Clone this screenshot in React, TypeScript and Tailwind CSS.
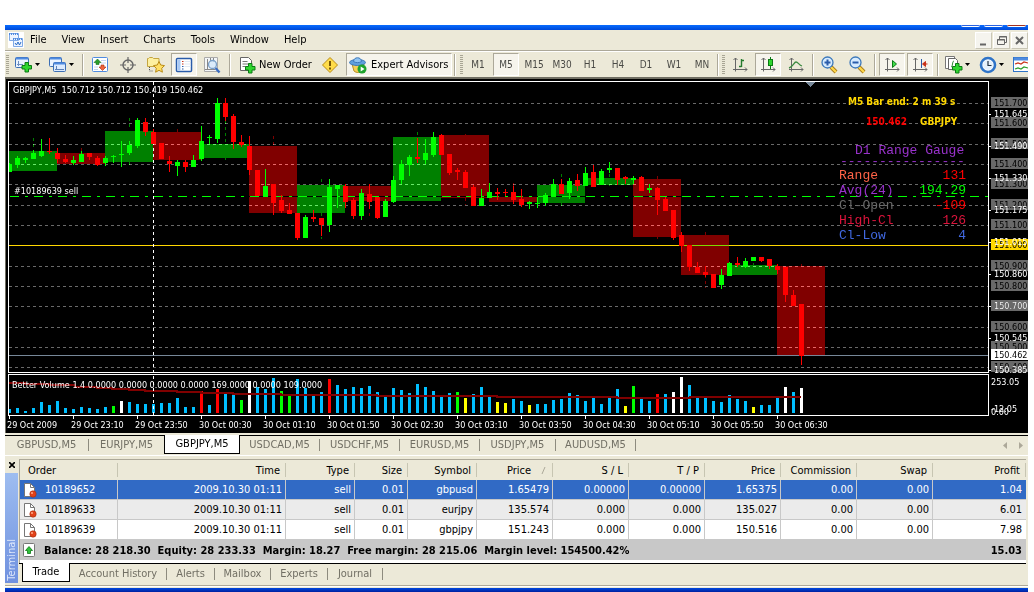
import React from "react";

type Candle = [hi: number, lo: number, top: number, bottom: number, up: 0 | 1];
type Kind = "b" | "g" | "w" | "r" | "y";

const UI = "font-['DejaVu_Sans_Condensed','Liberation_Sans',sans-serif]";

const candles: Candle[] = [
  [163, 172, 164, 172, 1], [156, 168, 158, 165, 1], [157, 163, 158, 160, 1], [150, 159, 153, 159, 1],
  [139, 157, 151, 156, 1], [138, 154, 151, 152, 0], [148, 163, 153, 159, 0], [155, 163, 159, 162, 0],
  [156, 165, 160, 163, 1], [151, 162, 154, 162, 1], [153, 160, 153, 157, 0], [156, 166, 158, 165, 0],
  [156, 166, 158, 163, 1], [155, 163, 156, 157, 1], [141, 167, 154, 155, 1], [141, 155, 145, 153, 1],
  [118, 148, 120, 146, 1], [118, 136, 122, 132, 0], [129, 144, 132, 144, 0], [143, 159, 143, 159, 0],
  [156, 172, 161, 164, 0], [160, 176, 162, 166, 1], [160, 172, 162, 167, 0], [155, 167, 160, 167, 1],
  [126, 161, 141, 159, 1], [135, 144, 137, 138, 1], [98, 143, 103, 139, 1], [98, 121, 103, 117, 0],
  [114, 149, 116, 142, 0], [135, 147, 142, 145, 0], [136, 175, 146, 170, 0], [170, 196, 170, 196, 0],
  [169, 197, 186, 197, 1], [184, 215, 184, 203, 0], [195, 213, 200, 211, 0], [203, 214, 210, 214, 0],
  [213, 240, 213, 238, 0], [215, 238, 217, 238, 1], [210, 222, 217, 219, 0], [218, 236, 218, 225, 0],
  [179, 232, 187, 225, 1], [185, 208, 185, 189, 1], [184, 208, 186, 202, 0], [198, 219, 200, 216, 0],
  [189, 220, 193, 216, 1], [184, 209, 194, 202, 0], [197, 219, 197, 218, 0], [199, 217, 201, 217, 1],
  [176, 203, 180, 202, 1], [160, 184, 164, 180, 1], [155, 176, 157, 165, 1], [138, 163, 157, 159, 0],
  [139, 164, 153, 160, 1], [132, 157, 137, 155, 1], [134, 155, 135, 155, 0], [154, 175, 154, 173, 0],
  [168, 180, 170, 172, 0], [170, 188, 172, 188, 0], [185, 206, 187, 206, 0], [189, 206, 198, 206, 1],
  [183, 198, 192, 198, 1], [188, 200, 192, 194, 0], [189, 196, 192, 193, 0], [186, 204, 192, 200, 0],
  [189, 207, 199, 205, 0], [201, 209, 202, 204, 1], [197, 208, 203, 204, 1], [193, 206, 195, 203, 1],
  [179, 197, 184, 197, 1], [179, 194, 184, 194, 0], [178, 199, 181, 193, 1], [174, 191, 180, 186, 0],
  [167, 186, 173, 186, 1], [165, 187, 172, 187, 0], [169, 185, 171, 185, 1], [162, 173, 168, 170, 1],
  [168, 185, 168, 180, 0], [176, 184, 177, 179, 0], [176, 184, 178, 180, 1], [176, 191, 177, 191, 0],
  [184, 193, 188, 190, 1], [187, 215, 188, 200, 0], [197, 211, 199, 211, 0], [210, 240, 210, 238, 0],
  [232, 252, 235, 246, 0], [245, 271, 245, 267, 0], [262, 273, 267, 273, 0], [266, 277, 272, 275, 0],
  [274, 288, 274, 288, 0], [269, 289, 275, 285, 1], [262, 276, 263, 276, 1], [257, 267, 263, 265, 0],
  [258, 268, 261, 267, 1], [257, 261, 257, 261, 1], [257, 262, 257, 261, 0], [259, 269, 259, 266, 0],
  [264, 274, 266, 270, 0], [267, 302, 267, 295, 0], [290, 306, 295, 306, 0], [304, 365, 304, 356, 0],
];

const blocks: [top: number, bottom: number, up: 0 | 1][] = [
  [151, 171, 1], [153, 164, 0], [131, 162, 1], [132, 160, 0], [144, 158, 1], [146, 213, 0],
  [185, 213, 1], [186, 201, 0], [137, 201, 1], [135, 198, 0], [197, 202, 0], [185, 203, 1],
  [178, 185, 1], [179, 237, 0], [235, 275, 0], [265, 275, 1], [266, 355, 0],
];

const blockWicks: [x: number, top: number, bottom: number, up: 0 | 1][] = [
  [33, 138, 141, 1], [33, 144, 147, 1], [81, 148, 151, 0], [129, 118, 121, 1], [129, 124, 127, 1],
  [129, 162, 165, 1], [177, 129, 132, 0], [225, 121, 124, 1], [225, 127, 130, 1], [225, 133, 136, 1],
  [225, 139, 142, 1], [225, 158, 160, 1], [273, 136, 139, 0], [273, 142, 145, 0], [321, 179, 182, 1],
  [321, 213, 216, 1], [321, 237, 239, 1], [369, 213, 216, 0], [417, 132, 135, 1], [465, 134, 135, 0],
  [465, 198, 201, 0], [465, 204, 205, 0], [513, 183, 186, 0], [561, 174, 177, 1], [561, 203, 206, 1],
  [609, 174, 177, 1], [609, 185, 186, 1], [657, 176, 179, 0], [657, 237, 239, 0], [705, 232, 235, 0],
  [705, 277, 278, 0], [705, 281, 284, 0], [705, 287, 288, 0], [753, 263, 265, 1], [801, 264, 266, 0],
];

const volumes =
  "4 5 2 5 11 8 12 5 4 6 5 4 6 7g 12w 11 9 9 9 10 10 15 6 6 22r 8 24r 19 19 13g 32w 26 24 35 22g 17g 34 25 18 21 34r 28 24 26 25 27 21 18 25 23 20 29 26 22 17 20 21g 15y 19 26 17 11y 10y 14 12 8y 9 9 13 14 20 18 12 15 9 15 24 7y 27g 14 12 19r 19 21w 36w 28 16 15 12 11 18 14 12 6y 8 8 16 26w 21 25w".split(" ");
const volumeColor: Record<Kind, string> = { b: "#00bfff", g: "#00ff00", w: "#ffffff", r: "#ff0000", y: "#ffff00" };

const grid: [y: number, label: string][] = [
  [103, "151.700"], [123, "151.600"], [144, "151.500"], [164, "151.400"], [184, "151.300"], [205, "151.200"],
  [225, "151.100"], [266, "150.900"], [286, "150.800"], [306, "150.700"], [327, "150.600"], [347, "150.500"],
  [367, "150.400"],
];
const scale: [y: number, label: string][] = [
  [114, "151.645"], [146, "151.490"], [178, "151.330"], [210, "151.175"], [242, "151.015"], [274, "150.860"],
  [306, "150.700"], [338, "150.545"], [370, "150.385"],
];
const times = [
  "29 Oct 2009", "29 Oct 23:10", "29 Oct 23:50", "30 Oct 00:30", "30 Oct 01:10", "30 Oct 01:50", "30 Oct 02:30",
  "30 Oct 03:10", "30 Oct 03:50", "30 Oct 04:30", "30 Oct 05:10", "30 Oct 05:50", "30 Oct 06:30",
];
const gauge: [y: number, label: string, value: string, c1: string, c2: string][] = [
  [179, "Range", "131", "#ff6347", "#ff0000"],
  [194, "Avg(24)", "194.29", "#9932cc", "#00ff00"],
  [209, "Cl-Open", "-109", "#696969", "#ff0000"],
  [224, "High-Cl", "126", "#dc143c", "#dc143c"],
  [239, "Cl-Low", "4", "#4169e1", "#4169e1"],
];

const upColor = (up: number) => (up ? "#00ff00" : "#ff0000");
const blockColor = (up: number) => (up ? "#008000" : "#800000");

function Chart() {
  return (
    <svg
      viewBox="5 79 1023 354"
      className={`block w-full bg-black text-[9px] ${UI}`}
      shapeRendering="crispEdges"
      role="img"
      aria-label="GBPJPY,M5"
    >
      {blocks.map(([t, b, up], i) => (
        <rect key={i} x={9 + i * 48} y={t} width={48} height={b - t} fill={blockColor(up)} />
      ))}
      {blockWicks.map(([x, t, b, up], i) => (
        <rect key={i} x={x} y={t} width={1} height={b - t} fill={blockColor(up)} />
      ))}
      {grid.map(([y]) => (
        <line key={y} x1={9} x2={988} y1={y + 0.5} y2={y + 0.5} stroke="#696969" strokeDasharray="3 3" className="mix-blend-plus-lighter" />
      ))}
      <rect x={9} y={196} width={979} height={1} fill="#000" />
      <line x1={10} x2={988} y1={196.5} y2={196.5} stroke="#00ff00" strokeDasharray="9 6 3 6" />
      <rect x={9} y={245} width={979} height={1} fill="#ffd700" />
      <rect x={681} y={245} width={48} height={1} fill="#7fd700" />
      <rect x={9} y={355} width={979} height={1} fill="#778899" />
      <line x1={153.5} x2={153.5} y1={82} y2={372} stroke="#fff" strokeDasharray="3 3" />
      {candles.map(([hi, lo, t, b, up], i) => {
        const x = 9 + i * 8;
        return (
          <g key={i} fill={upColor(up)}>
            <rect x={x} y={hi} width={1} height={lo - hi} />
            <rect x={i ? x - 2 : x} y={t} width={i ? 5 : 3} height={b - t} />
          </g>
        );
      })}
      <path d="M806 82h9l-4 5h-1z" fill="#778899" />

      {volumes.map((v, i) => {
        const h = parseInt(v, 10);
        const kind = (v.replace(/\d/g, "") || "b") as Kind;
        return <rect key={i} x={i ? 8 + i * 8 : 9} y={413 - h} width={i ? 3 : 2} height={h} fill={volumeColor[kind]} />;
      })}
      <path
        d="M9 383H25V384H50V385H75V387H97V388H112V389H129V390H145V391H177V392H201V393H233V394H281V395H377V396H497V397H617V398H690V397H801"
        fill="none"
        stroke="#800000"
        strokeWidth={2}
      />
      <line x1={153.5} x2={153.5} y1={376} y2={415} stroke="#fff" strokeDasharray="3 3" />

      <g fill="none" stroke="#fff">
        <path d="M8.5 372.5V81.5H988.5V372.5Z" />
        <path d="M8.5 415.5V374.5H988.5V415.5Z" />
        {times.map((t, i) => (
          <path key={t} d={`M${9.5 + 64 * i} 416v3`} />
        ))}
        {scale.map(([y]) => (
          <path key={y} d={`M989 ${y + 0.5}h2`} />
        ))}
      </g>
      <rect x={5} y={79} width={1} height={354} fill="#716f64" />

      {grid.map(([y, label]) => (
        <g key={label}>
          <rect x={991} y={y - 6} width={37} height={11} fill="#696969" />
          <text x={994} y={y + 3} fill="#000">{label}</text>
        </g>
      ))}
      <rect x={991} y={239} width={37} height={11} fill="#ffd700" />
      <text x={994} y={248} fill="#000">151.000</text>
      {scale.map(([y, label]) => (
        <text key={label} x={994} y={y + 3} fill="#fff">{label}</text>
      ))}
      <rect x={991} y={349} width={37} height={11} fill="#fff" />
      <text x={994} y={358} fill="#000">150.462</text>
      <text x={991} y={385} fill="#fff">253.05</text>
      <text x={991} y={412} fill="#fff">-12.05</text>
      <text x={991} y={415} fill="#fff">0.00</text>

      <g fill="#fff">
        <text x={13} y={93} className="whitespace-pre">{"GBPJPY,M5  150.712 150.712 150.419 150.462"}</text>
        <text x={14} y={194}>#10189639 sell</text>
        <text x={12} y={388}>Better Volume 1.4 0.0000 0.0000 0.0000 0.0000 169.0000 0.0000 109.0000</text>
        {times.map((t, i) => (
          <text key={t} x={7 + 64 * i} y={428}>{t}</text>
        ))}
      </g>

      <g className="text-[10px] font-bold" fill="#ffd700">
        <text x={848} y={105}>M5 Bar end: 2 m 39 s</text>
        <text x={866} y={125} fill="#ff0000">150.462</text>
        <text x={920} y={125}>GBPJPY</text>
      </g>
      <g className="font-['Liberation_Mono',monospace] text-[13px]">
        <text x={855} y={154} fill="#9932cc">D1 Range Gauge</text>
        <text x={840} y={165} fill="#9932cc">----------------</text>
        {gauge.map(([y, label, value, c1, c2]) => (
          <g key={label}>
            <text x={839} y={y} fill={c1}>{label}</text>
            <text x={966} y={y} fill={c2} textAnchor="end">{value}</text>
          </g>
        ))}
      </g>
    </svg>
  );
}

function Icon({ children, size = 18 }: { children: React.ReactNode; size?: number }) {
  return (
    <svg width={size} height={size} viewBox={`0 0 ${size} ${size}`} className="shrink-0" aria-hidden="true">
      {children}
    </svg>
  );
}

const plus = (x: number, y: number) => (
  <path transform={`translate(${x} ${y})`} d="M3.500.5h3.500v3h3v3.500h-3v3h-3.500v-3h-3v-3.500h3z" fill="#2fd62f" stroke="#0a7a14" />
);
const page = (
  <path d="M1.500 1.500h8l3 3v10h-11z" fill="#fff" stroke="#666" />
);

const NewChartIcon = () => (
  <Icon>
    <rect x=".5" y="1.500" width="13" height="10" rx="1" fill="#eaf3ff" stroke="#3c6fb5" />
    <path d="M1 2.500h12" stroke="#4f8be0" strokeWidth="2" />
    <path d="M3.500 5v5M2 8.500h6" stroke="#6d8fc0" />
    {plus(6.5, 6)}
  </Icon>
);
const ProfilesIcon = () => (
  <Icon>
    <rect x=".5" y="1.500" width="12" height="9" rx="1" fill="#eaf3ff" stroke="#3c6fb5" />
    <path d="M1 2.500h11" stroke="#4f8be0" strokeWidth="2" />
    <rect x="4.500" y="6.500" width="12" height="9" rx="1" fill="#dcebff" stroke="#3c6fb5" />
    <path d="M5 7.500h11" stroke="#4f8be0" strokeWidth="2" />
    <path d="M6 13.500h9M7.500 10v4" stroke="#5b80b8" />
  </Icon>
);
const MarketIcon = () => (
  <Icon>
    <rect x="1.500" y="1.500" width="15" height="14" rx="1" fill="#fff" stroke="#4f8be0" />
    <path d="M10 4.500h5M10 7h5M3 11h4M3 13.500h4" stroke="#c3d6ee" />
    <path d="M6.500 3l3.500 3.500h-2v2h-3v-2h-2z" fill="#2a9d2a" stroke="#17701c" strokeWidth=".6" />
    <path d="M11.500 14.500l-3.500-3.500h2v-2h3v2h2z" fill="#f0643c" stroke="#a52c0c" strokeWidth=".6" />
  </Icon>
);
const CrosshairIcon = () => (
  <Icon>
    <circle cx="9" cy="9" r="5" fill="none" stroke="#666" strokeWidth="1.400" />
    <path d="M9 1v6M9 11v6M1 9h6M11 9h6" stroke="#666" strokeWidth="1.200" />
  </Icon>
);
const NavigatorIcon = () => (
  <Icon>
    <path d="M.5 10.500v-8h1l1-1h3l1 1h5.500v8z" fill="#fdf0a0" stroke="#c4a540" />
    <path d="M2.500 11v4h4" stroke="#555" strokeDasharray="1 1" fill="none" />
    <path d="M12 5.500l1.700 3.500 3.800.6-2.800 2.700.7 3.900-3.400-1.900-3.400 1.900.7-3.900-2.800-2.700 3.800-.6z" fill="#ffe066" stroke="#b98b15" />
  </Icon>
);
const TerminalIcon = () => (
  <Icon>
    <rect x="1.500" y="2.500" width="15" height="13" rx="1" fill="#fff" stroke="#2a5caa" strokeWidth="1.500" />
    <rect x="2.500" y="3.500" width="3" height="11" fill="#a9c9f5" />
    <path d="M7 5.500h1.500M7 8h1.500" stroke="#c8321a" />
    <path d="M7 10.500h1.500M7 13h1.500" stroke="#2a5caa" />
    <path d="M9.500 5.500h6M9.500 8h6M9.500 10.500h6" stroke="#e0e8f4" />
  </Icon>
);
const TesterIcon = () => (
  <Icon>
    <path d="M1.500 1.500h13v14h-13z" fill="#f3f6f8" stroke="#aaa" />
    <path d="M4.500 3v10M2 13.500h10M7.500 2v3M10.500 2v4" stroke="#888" />
    <circle cx="9.500" cy="8.500" r="4" fill="#d6e9fb" fillOpacity=".85" stroke="#7ba0c8" strokeWidth="1.300" />
    <path d="M12.500 12l4 4.500" stroke="#3a6cc0" strokeWidth="2.400" />
  </Icon>
);
const OrderIcon = () => (
  <Icon>
    {page}
    <path d="M3.500 5.500h5M3.500 8h7M3.500 10.500h3" stroke="#777" />
    {plus(6, 7)}
  </Icon>
);
const AlertIcon = () => (
  <Icon>
    <path d="M9 1.500L16.500 9 9 16.500 1.500 9z" fill="#ffdc4a" stroke="#b98b15" strokeLinejoin="round" />
    <path d="M9 5v5M9 11.500v2" stroke="#6a4a00" strokeWidth="1.800" />
  </Icon>
);
const ExpertIcon = () => (
  <Icon>
    <path d="M3 8l2 7c2 2 7 2 8 0l2-7z" fill="#f6cf55" stroke="#b88f22" />
    <ellipse cx="8.500" cy="6.500" rx="8" ry="3" fill="#5f9fdc" stroke="#3c78ba" />
    <path d="M4.500 5.500c0-5 8-5 8 0-2 1.500-6 1.500-8 0z" fill="#8fc3f2" stroke="#3c78ba" />
    <circle cx="13" cy="13" r="4.500" fill="#1fa32c" />
    <path d="M11.700 10.500v5l3.800-2.500z" fill="#fff" />
  </Icon>
);
const axes = <path d="M4.500 2v13.500M2.500 4l2-2 2 2M2 13.500h14M14 11.500l2 2-2 2" fill="none" stroke="#666" />;
const BarsIcon = () => (
  <Icon>
    {axes}
    <path d="M10.500 3v8M10.500 4.500h2.500M8 10.500h2.500" stroke="#257a2d" strokeWidth="1.400" />
  </Icon>
);
const CandlesIcon = () => (
  <Icon>
    {axes}
    <path d="M11.500 1v12" stroke="#0a7a14" />
    <rect x="9.500" y="3.500" width="4" height="6" fill="#2fd62f" stroke="#0a7a14" />
  </Icon>
);
const LineIcon = () => (
  <Icon>
    {axes}
    <path d="M2 12c4-1 5-6 7-6s3 3 6 4" fill="none" stroke="#3b8a40" strokeWidth="1.300" />
  </Icon>
);
const ZoomIcon = ({ plus: isPlus }: { plus?: boolean }) => (
  <Icon>
    <path d="M11 11l5 5" stroke="#a97b18" strokeWidth="4" />
    <path d="M11 11l5 5" stroke="#ffd84a" strokeWidth="2.200" />
    <circle cx="7.500" cy="6.500" r="5.500" fill="#d6ebff" stroke="#3c78ba" strokeWidth="1.300" />
    <path d={isPlus ? "M4.500 6.500h6M7.500 3.500v6" : "M4.500 6.500h6"} stroke="#2a5caa" strokeWidth="2" />
  </Icon>
);
const AutoScrollIcon = () => (
  <Icon>
    {axes}
    <path d="M9.500 4.500v7l4-3.500z" fill="#3fdc4a" stroke="#0a7a14" />
  </Icon>
);
const ShiftIcon = () => (
  <Icon>
    {axes}
    <path d="M10.500 3v9" stroke="#2a5caa" />
    <path d="M12 8h4.500M14.500 5.500l-3 2.500 3 2.500z" stroke="#c8321a" fill="#c8321a" />
  </Icon>
);
const IndicatorIcon = () => (
  <Icon>
    <path d="M.5.5h9v12h-9z" fill="#fff" stroke="#777" />
    <path d="M3.500 2.500h7l2 2v9h-9z" fill="#fff" stroke="#666" />
    <path d="M6 11c2 0 1-6 3-6" fill="none" stroke="#2f8a35" />
    {plus(7, 7)}
  </Icon>
);
const ClockIcon = () => (
  <Icon>
    <circle cx="9" cy="9" r="7" fill="#fff" stroke="#2f74c8" strokeWidth="2.600" />
    <circle cx="9" cy="9" r="5" fill="#e5f1fd" />
    <path d="M9 5v4.500h3.500" fill="none" stroke="#234" strokeWidth="1.200" />
  </Icon>
);
const TemplateIcon = () => (
  <Icon>
    <rect x=".5" y="1.500" width="17" height="14" fill="#fff" stroke="#2f74c8" />
    <path d="M1 3h17" stroke="#4f8be0" strokeWidth="3" />
    <path d="M2 8l3-1 3 1 3-2 4 1" stroke="#c8321a" fill="none" strokeWidth="1.200" />
    <path d="M2 13l3-1 3 1 3-2 4 1" stroke="#2a9d2a" fill="none" strokeWidth="1.200" />
  </Icon>
);
const OrderRowIcon = () => (
  <Icon size={16}>
    <path d="M3.500 1.500h6l4 4v9h-10z" fill="#fff" stroke="#777" />
    <path d="M9.500 1.500v4h4" fill="none" stroke="#777" />
    <circle cx="12" cy="12" r="3.200" fill="#e2421a" stroke="#a52c0c" strokeWidth=".6" />
    <circle cx="11" cy="11" r="1" fill="#ffab8a" />
  </Icon>
);
const BalanceIcon = () => (
  <Icon size={16}>
    <rect x="2.500" y="1.500" width="11" height="13" rx="1" fill="#fff" stroke="#777" />
    <path d="M8 4.500l3.500 4h-2v3h-3v-3h-2z" fill="#2fc23a" stroke="#0a7a14" strokeWidth=".8" />
  </Icon>
);

const Sep = ({ className }: { className: string }) => (
  <span className={`flex shrink-0 justify-center ${className}`}>
    <span className="h-[22px] w-px bg-[#aca899]" />
    <span className="h-[22px] w-px bg-white" />
  </span>
);
const Grip = () => (
  <span className="flex h-[22px] w-[3px] shrink-0 flex-col justify-center gap-px">
    {Array.from({ length: 10 }, (_, i) => (
      <span key={i} className="h-px bg-[#a8a594]" />
    ))}
  </span>
);
const Caret = () => (
  <svg width="5" height="3" viewBox="0 0 5 3" aria-hidden="true">
    <path d="M0 0h5L2.500 3z" />
  </svg>
);

function Tool({ label, pressed, children }: { label: string; pressed?: boolean; children: React.ReactNode }) {
  return (
    <button type="button" aria-label={label} aria-pressed={pressed} className="flex w-7 shrink-0 items-center justify-center">
      <span
        className={
          pressed
            ? "flex h-[23px] w-[26px] items-center justify-center border border-[#aca899] border-r-white border-b-white bg-[#f6f4ec]"
            : "flex h-[23px] w-[26px] items-center justify-center"
        }
      >
        {children}
      </span>
    </button>
  );
}
function DropTool({ label, children }: { label: string; children: React.ReactNode }) {
  return (
    <button type="button" aria-label={label} className="flex w-[34px] shrink-0 items-center gap-[2px] pl-[3px]">
      {children}
      <Caret />
    </button>
  );
}

function Toolbar() {
  return (
    <div className="flex h-[26px] items-center overflow-hidden border-t border-white bg-[#ece9d8]" role="toolbar">
      <span className="flex w-[7px] shrink-0 pl-px"><Grip /></span>
      <DropTool label="New chart"><NewChartIcon /></DropTool>
      <DropTool label="Profiles"><ProfilesIcon /></DropTool>
      <Sep className="w-[6px]" />
      <Tool label="Market Watch"><MarketIcon /></Tool>
      <Tool label="Crosshair"><CrosshairIcon /></Tool>
      <Tool label="Navigator"><NavigatorIcon /></Tool>
      <Tool label="Terminal" pressed><TerminalIcon /></Tool>
      <Tool label="Strategy Tester"><TesterIcon /></Tool>
      <Sep className="w-2" />
      <button type="button" className="flex w-[82px] shrink-0 items-center gap-[2px] pl-[5px] text-[11px] whitespace-nowrap">
        <OrderIcon />
        New Order
      </button>
      <Tool label="Alerts"><AlertIcon /></Tool>
      <span className="w-[2px] shrink-0" />
      <button
        type="button"
        aria-pressed
        className="flex h-[23px] w-[106px] shrink-0 items-center gap-1 border border-[#aca899] border-r-white border-b-white bg-[#f6f4ec] pl-[2px] text-[11px] whitespace-nowrap"
      >
        <ExpertIcon />
        Expert Advisors
      </button>
      <span className="flex w-3 shrink-0 items-center gap-[3px] pl-px">
        <Sep className="w-[4px]" />
        <Grip />
      </span>
      {["M1", "M5", "M15", "M30", "H1", "H4", "D1", "W1", "MN"].map((t) => (
        <Tool key={t} label={t} pressed={t === "M5"}>
          <span className="text-[10px] text-[#4a4a46]">{t}</span>
        </Tool>
      ))}
      <span className="flex w-[10px] shrink-0 items-center gap-[2px]">
        <Sep className="w-[4px]" />
        <Grip />
      </span>
      <Tool label="Bar chart"><BarsIcon /></Tool>
      <Tool label="Candlesticks" pressed><CandlesIcon /></Tool>
      <Tool label="Line chart"><LineIcon /></Tool>
      <Sep className="w-[5px]" />
      <Tool label="Zoom in"><ZoomIcon plus /></Tool>
      <Tool label="Zoom out"><ZoomIcon /></Tool>
      <Sep className="w-[7px]" />
      <Tool label="Auto scroll" pressed><AutoScrollIcon /></Tool>
      <Tool label="Chart shift" pressed><ShiftIcon /></Tool>
      <Sep className="w-2" />
      <DropTool label="Indicators"><IndicatorIcon /></DropTool>
      <DropTool label="Periods"><ClockIcon /></DropTool>
      <DropTool label="Templates"><TemplateIcon /></DropTool>
    </div>
  );
}

function MenuBar() {
  return (
    <div className="flex h-5 items-center bg-[#ece9d8] pl-[3px]">
      <Icon size={16}>
        <rect width="16" height="16" fill="#fff" />
        <path d="M1.500 1.500h9v7h-9zM5.500 6.500h9v8h-9z" fill="#eef5ff" stroke="#7fa9e6" />
        <path d="M1 2h10M5 7h10" stroke="#4f8be0" strokeDasharray="1 1" strokeWidth="2" />
        <path d="M7 11l1.500 2 1.500-3 1.500 3 1.500-3" fill="none" stroke="#2a6cc8" />
      </Icon>
      <nav className="flex flex-1 gap-[15px] pl-[6px] text-[11px]">
        {["File", "View", "Insert", "Charts", "Tools", "Window", "Help"].map((m) => (
          <button key={m} type="button">{m}</button>
        ))}
      </nav>
      <div className="flex gap-px">
        {[
          ["Minimize", "M4 11.500h6"],
          ["Restore", "M5.500 6V3.500h7v6h-2M5 4h8M3.500 6.500h7v5h-7zM3 7h8"],
          ["Close", "M4 4l7 7M11 4l-7 7"],
        ].map(([label, d]) => (
          <button key={label} type="button" aria-label={label} className="flex h-[17px] w-[17px] items-center justify-center border border-white border-r-[#c9c6b6] border-b-[#c9c6b6] bg-[#f5f4ee]">
            <svg width="15" height="15" viewBox="0 0 15 15" aria-hidden="true">
              <path d={d} fill="none" stroke="#666" strokeWidth={label === "Restore" ? 1 : 2} />
            </svg>
          </button>
        ))}
      </div>
    </div>
  );
}

const chartTabs: [name: string, width: string, bar: boolean][] = [
  ["GBPUSD,M5", "w-[84px]", true],
  ["EURJPY,M5", "w-[75px]", false],
  ["GBPJPY,M5", "w-[76px]", false],
  ["USDCAD,M5", "w-[80px]", true],
  ["USDCHF,M5", "w-[80px]", true],
  ["EURUSD,M5", "w-[80px]", true],
  ["USDJPY,M5", "w-[76px]", true],
  ["AUDUSD,M5", "w-[80px]", true],
];

function ChartTabs() {
  return (
    <div className="flex h-[23px] items-start border-b border-white bg-[#ece9d8] pt-[2px] text-[11px] text-[#716f64]" role="tablist">
      {chartTabs.map(([name, width, bar]) => {
        const active = name === "GBPJPY,M5";
        return (
          <button
            key={name}
            type="button"
            role="tab"
            aria-selected={active}
            className={`flex shrink-0 items-center ${width} ${
              active ? "h-[19px] justify-center border border-t-0 border-black bg-white text-black" : "h-[19px] border-t border-black"
            }`}
          >
            <span className="flex-1 text-center">{name}</span>
            {bar && <span className="h-3 w-px bg-[#8d8b7e]" />}
          </button>
        );
      })}
      <div className="flex h-[19px] flex-1 items-center justify-end gap-3 border-t border-black pr-[5px]">
        <svg width="4" height="7" viewBox="0 0 4 7" aria-hidden="true"><path d="M4 0v7L0 3.500z" fill="#aca899" /></svg>
        <svg width="4" height="7" viewBox="0 0 4 7" aria-hidden="true"><path d="M0 0v7l4-3.500z" fill="#aca899" /></svg>
      </div>
    </div>
  );
}

const columns: [name: string, width: string][] = [
  ["Order", "w-[98px]"], ["Time", "w-[168px]"], ["Type", "w-[69px]"], ["Size", "w-[53px]"],
  ["Symbol", "w-[69px]"], ["Price", "w-[76px]"], ["S / L", "w-[76px]"], ["T / P", "w-[76px]"],
  ["Price", "w-[76px]"], ["Commission", "w-[76px]"], ["Swap", "w-[76px]"], ["Profit", ""],
];
const orders = [
  ["10189652", "2009.10.30 01:11", "sell", "0.01", "gbpusd", "1.65479", "0.00000", "0.00000", "1.65375", "0.00", "0.00", "1.04"],
  ["10189633", "2009.10.30 01:11", "sell", "0.01", "eurjpy", "135.574", "0.000", "0.000", "135.027", "0.00", "0.00", "6.01"],
  ["10189639", "2009.10.30 01:11", "sell", "0.01", "gbpjpy", "151.243", "0.000", "0.000", "150.516", "0.00", "0.00", "7.98"],
];
const rowStyles = ["bg-[#316ac5] text-white", "bg-[#ebebeb]", "bg-white"];

function TradeTable() {
  return (
    <table className="w-full table-fixed border-separate border-spacing-0 text-[11px] leading-[19px] whitespace-nowrap">
      <colgroup>
        {columns.map(([, width], i) => (
          <col key={i} className={width} />
        ))}
      </colgroup>
      <thead>
        <tr className="h-5 bg-[#ece9d8]">
          {columns.map(([name], i) => (
            <th key={i} scope="col" className="p-0 font-normal">
              <div className={`flex h-[14px] items-center border-r border-[#c7c5b2] pr-[5px] ${i === 0 ? "pl-2" : "justify-end"}`}>
                {name}
                {i === 5 && (
                  <svg width="16" height="7" viewBox="0 0 16 7" aria-hidden="true">
                    <path d="M11 7l3-7" stroke="#aca899" />
                  </svg>
                )}
              </div>
            </th>
          ))}
        </tr>
      </thead>
      <tbody>
        {orders.map((row, r) => (
          <tr key={row[0]} className={`h-5 ${rowStyles[r]}`}>
            {row.map((cell, i) => (
              <td key={i} className="border-r border-b border-[#c8c8c8] p-0 pr-[3px] text-right last:border-r-0 last:pr-[4px]">
                {i === 0 ? (
                  <span className="flex items-center gap-2 pl-px">
                    <OrderRowIcon />
                    {cell}
                  </span>
                ) : (
                  cell
                )}
              </td>
            ))}
          </tr>
        ))}
      </tbody>
      <tfoot>
        <tr className="h-5 bg-[#c8c8c8] font-bold">
          <td colSpan={11} className="p-0">
            <span className="flex items-center gap-[7px] pl-px whitespace-pre">
              <BalanceIcon />
              {"Balance: 28 218.30  Equity: 28 233.33  Margin: 18.27  Free margin: 28 215.06  Margin level: 154500.42%"}
            </span>
          </td>
          <td className="p-0 pr-[4px] text-right">15.03</td>
        </tr>
      </tfoot>
    </table>
  );
}

const terminalTabs: [name: string, width: string][] = [
  ["Account History", "w-[97px]"], ["Alerts", "w-12"], ["Mailbox", "w-14"], ["Experts", "w-[57px]"], ["Journal", "w-[55px]"],
];

function Terminal() {
  return (
    <section className="flex bg-[#ece9d8] pt-[3px]">
      <div className="flex w-[14px] shrink-0 flex-col pr-px">
        <button type="button" aria-label="Close terminal" className="flex h-[14px] items-start justify-center pt-[3px]">
          <svg width="6" height="6" viewBox="0 0 6 6" aria-hidden="true"><path d="M0 0l6 6M6 0L0 6" stroke="#000" strokeWidth="1.600" /></svg>
        </button>
        <div className="flex flex-1 items-start justify-center bg-linear-to-b from-[#9ebdf0] to-[#7091df]">
          <span className="mt-auto mb-[2px] rotate-180 text-[11px] leading-[13px] text-[#dce6fa] [writing-mode:vertical-rl]">Terminal</span>
        </div>
      </div>
      <div className="min-w-0 flex-1 pr-[2px]">
        <div className="border-t border-l border-[#aca899] bg-white pb-[3px]">
          <TradeTable />
        </div>
        <div className="flex h-5 items-start pb-px text-[11px] text-[#716f64]" role="tablist">
          <span className="h-px w-[3px] bg-black" />
          <button type="button" role="tab" aria-selected className="h-[19px] w-12 border border-t-0 border-black bg-white leading-[18px] text-black">
            Trade
          </button>
          {terminalTabs.map(([name, width]) => (
            <button key={name} type="button" role="tab" aria-selected={false} className={`flex h-5 shrink-0 items-center border-t border-black whitespace-nowrap ${width}`}>
              <span className="flex-1 text-center">{name}</span>
              <span className="h-3 w-px bg-[#8d8b7e]" />
            </button>
          ))}
          <span className="h-px flex-1 bg-black" />
        </div>
      </div>
    </section>
  );
}

export default function App() {
  return (
    <main className={`bg-white pt-[25px] pr-[6px] pl-[5px] leading-[14px] text-black ${UI}`}>
      <div className="h-[5px] bg-linear-to-b from-[#0a6cff] to-[#0048d8]">
        <div className="flex justify-end gap-1 pr-[2px]">
          <span className="h-[2px] w-[19px] rounded-b border-b border-white bg-[#2a62e0]" />
          <span className="h-[2px] w-[19px] rounded-b border-b border-white bg-[#2a62e0]" />
          <span className="h-[2px] w-[19px] rounded-b border-b border-white bg-[#a03020]" />
        </div>
      </div>
      <MenuBar />
      <div className="h-px bg-[#aca899]" />
      <Toolbar />
      <div className="h-[2px] bg-[#716f64]" />
      <Chart />
      <ChartTabs />
      <Terminal />
      <div className="flex h-[5px] flex-col bg-[#ece9d8]">
        <span className="mt-[2px] h-px bg-[#aca899]" />
        <span className="h-px bg-white" />
      </div>
      <div className="h-1 bg-linear-to-b from-[#0048e0] to-[#0020a0]" />
    </main>
  );
}
